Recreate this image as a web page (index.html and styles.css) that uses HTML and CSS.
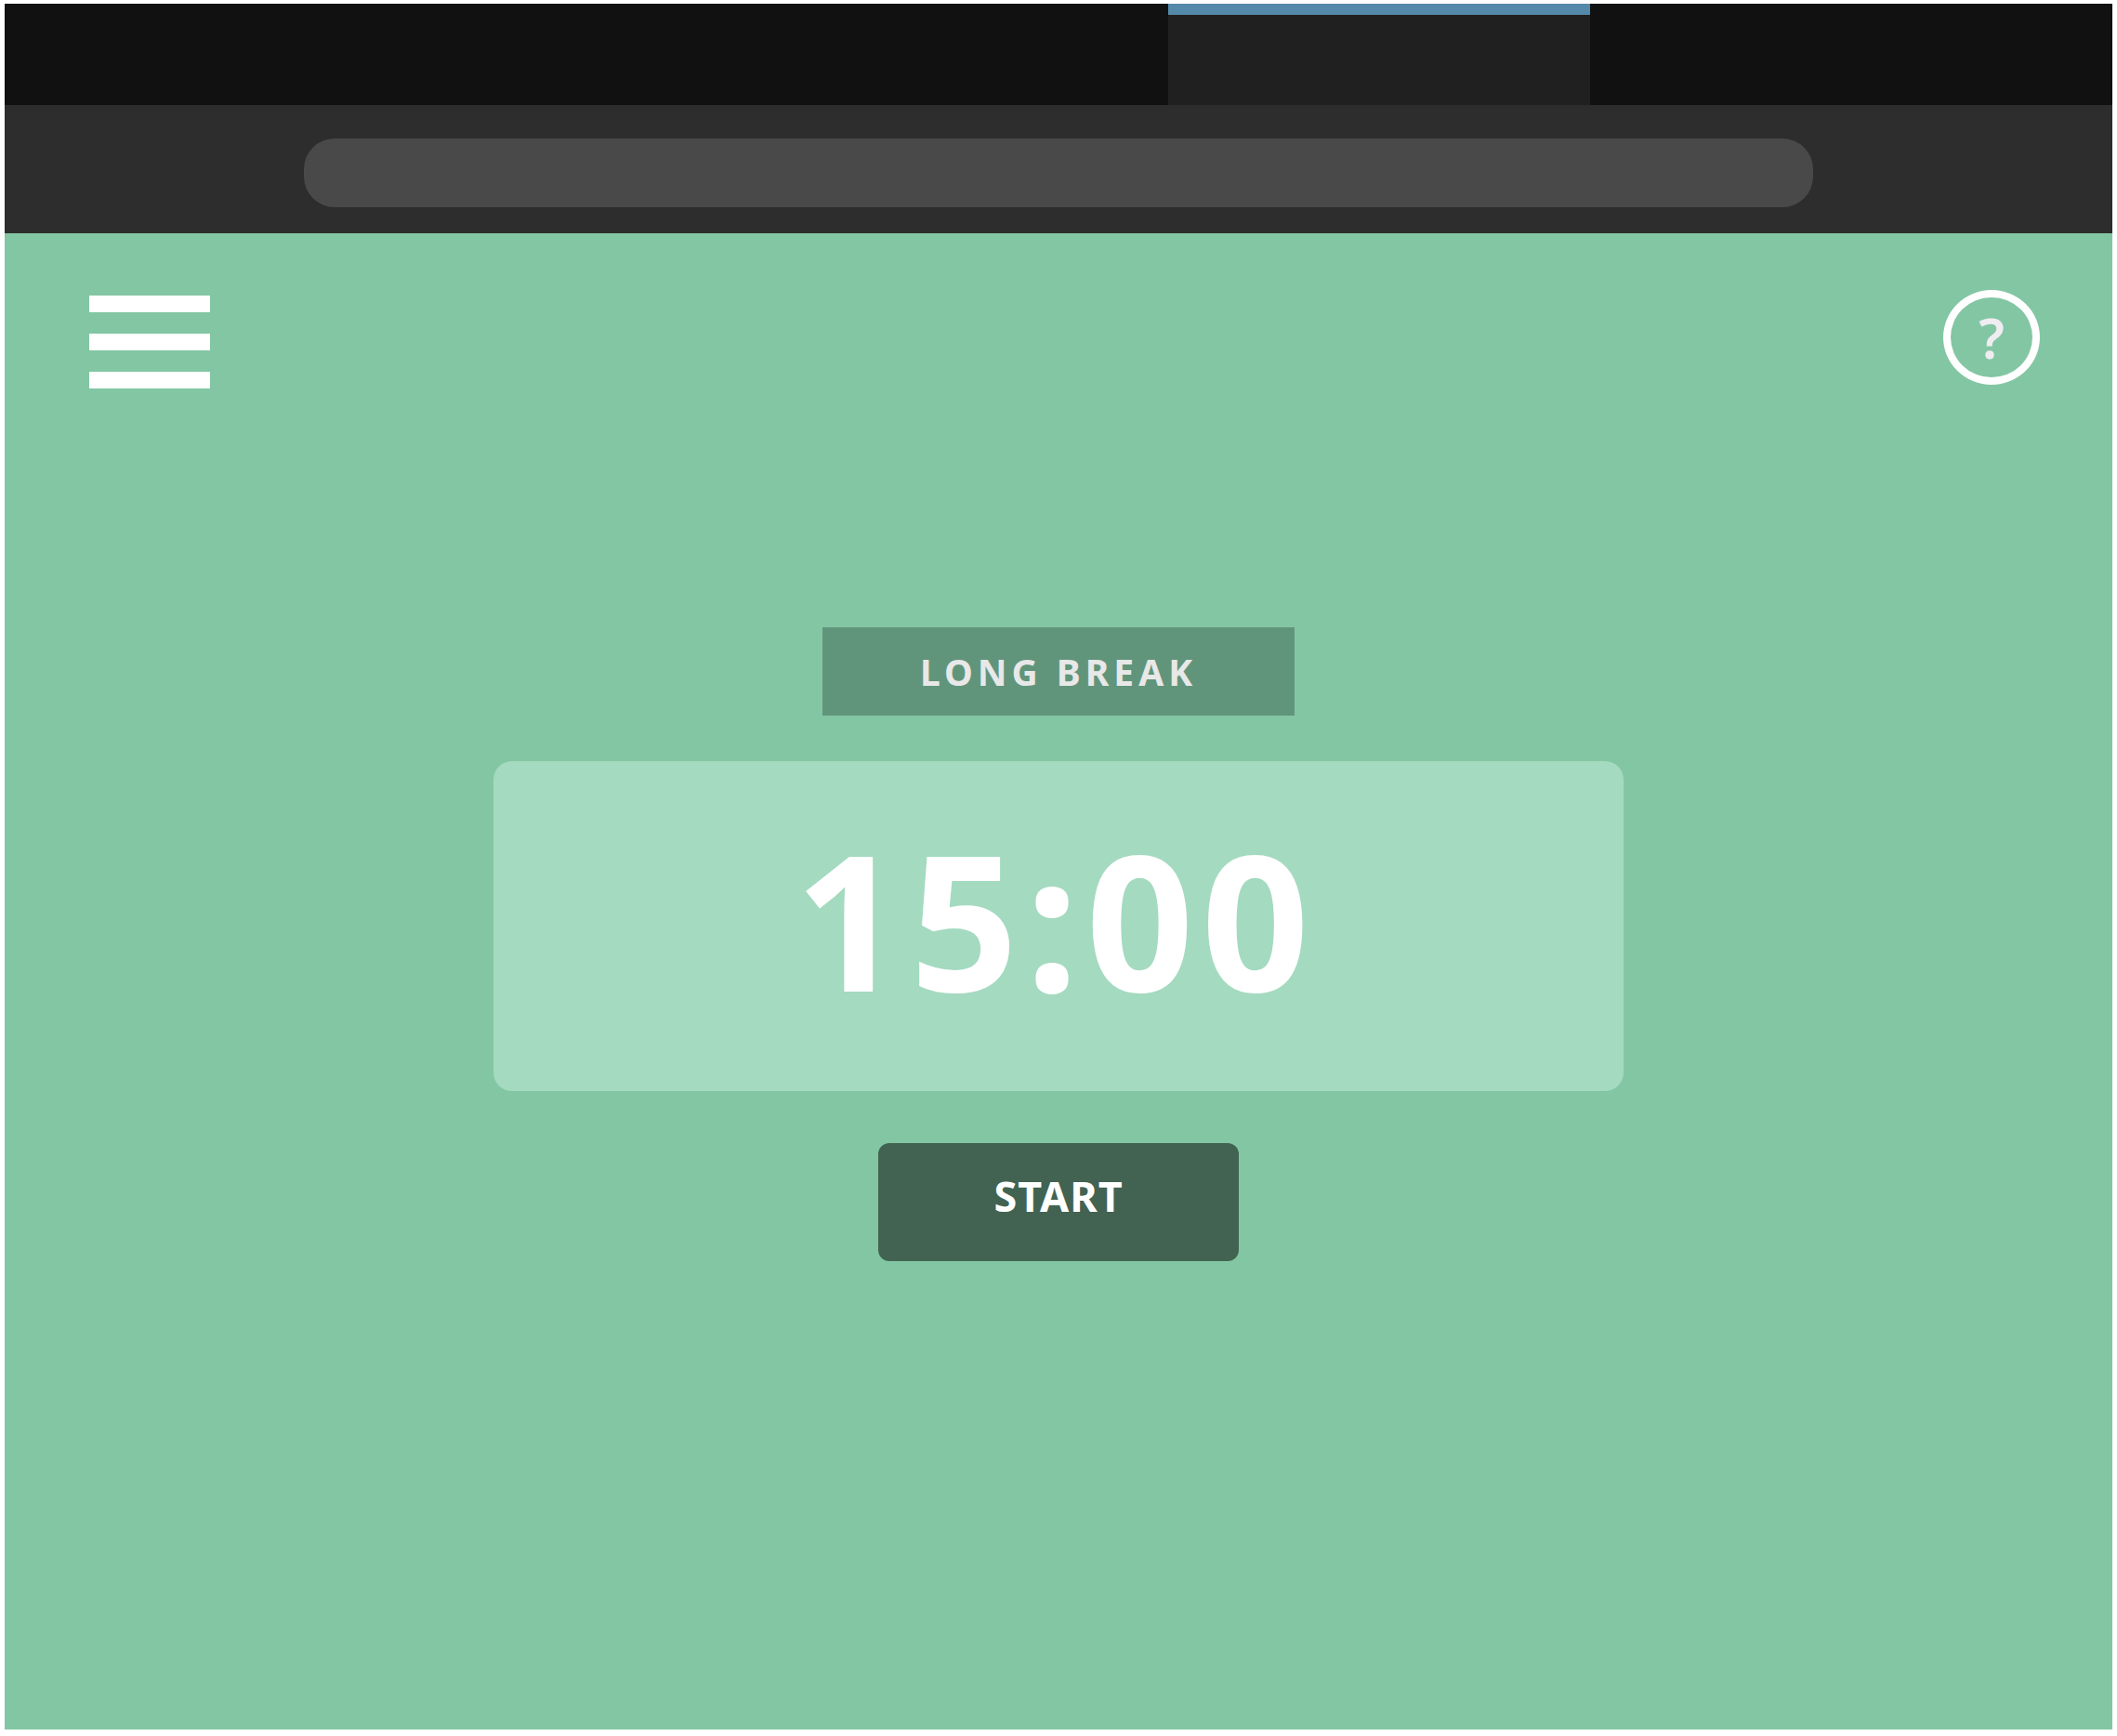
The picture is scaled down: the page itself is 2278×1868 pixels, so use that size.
FILE: index.html
```html
<!DOCTYPE html>
<html lang="en">
<head>
  <meta charset="utf-8">
  <meta name="viewport" content="width=device-width, initial-scale=1">
  <title>Long Break Timer</title>
  <link rel="stylesheet" href="styles.css">
</head>
<body>
  <div class="window">
    <div class="tab-strip">
      <div class="tab"></div>
    </div>
    <div class="toolbar">
      <input class="address" type="text" aria-label="Address">
    </div>
    <main class="app">
      <header class="app-header">
        <button class="menu" type="button" aria-label="Menu">
          <span class="menu-bar"></span>
          <span class="menu-bar"></span>
          <span class="menu-bar"></span>
        </button>
        <button class="help" type="button" aria-label="Help">?</button>
      </header>
      <section class="timer">
        <h1 class="mode">LONG BREAK</h1>
        <div class="clock" role="timer">15:00</div>
        <button class="start" type="button">START</button>
      </section>
    </main>
  </div>
</body>
</html>
```
FILE: styles.css
```css
* {
  box-sizing: border-box;
}

body {
  margin: 0;
  background: #fff;
  color: #fff;
  font-family: "Noto Sans", "Open Sans", sans-serif;
}

button,
input {
  margin: 0;
  padding: 0;
  border: 0;
  color: inherit;
  font: inherit;
}

.window {
  display: flex;
  flex-direction: column;
  min-height: 100vh;
  border: solid #fff;
  border-width: 4px 5px 7px;
}

.tab-strip {
  display: flex;
  height: 109px;
  background: #111;
}

.tab {
  width: 20%;
  margin-left: 55.2%;
  border-top: 12px solid #5589a9;
  background: #202020;
}

.toolbar {
  display: flex;
  justify-content: center;
  padding: 36px 0 28px;
  background: #2d2d2d;
}

.address {
  width: 71.6%;
  height: 74px;
  padding: 0 32px;
  border-radius: 33px;
  background: #494949;
  font-size: 32px;
}

.app {
  flex: 1;
  background: #83c6a3;
}

.app-header {
  display: flex;
  align-items: flex-start;
  justify-content: space-between;
  padding: 61px 78px 0 91px;
}

.menu {
  display: flex;
  flex-direction: column;
  gap: 23px;
  width: 130px;
  padding: 6px 0;
  background: none;
}

.menu-bar {
  height: 18px;
  background: #fff;
}

.help {
  width: 104px;
  height: 102px;
  border: 8px solid #fff;
  border-radius: 50%;
  background: none;
  color: #efedf1;
  font-size: 60px;
  font-weight: 600;
  line-height: 80px;
}

.timer {
  display: flex;
  flex-direction: column;
  align-items: center;
  padding: 251px 0 64px;
}

.mode {
  min-width: 508px;
  margin: 0 0 49px;
  background: #61957b;
  color: #e8e8e8;
  font-size: 39px;
  font-weight: 700;
  letter-spacing: 5px;
  line-height: 95px;
  text-align: center;
}

.clock {
  width: 53.6%;
  min-width: 640px;
  margin-bottom: 56px;
  padding: 0 6px 17px 0;
  border-radius: 20px;
  background: #a4dac0;
  font-size: 203px;
  font-weight: 700;
  letter-spacing: 8px;
  line-height: 338px;
  text-align: center;
}

.start {
  min-width: 388px;
  padding-bottom: 13px;
  border-radius: 12px;
  background: #426352;
  font-size: 45px;
  font-weight: 700;
  letter-spacing: 1px;
  line-height: 114px;
}
```
